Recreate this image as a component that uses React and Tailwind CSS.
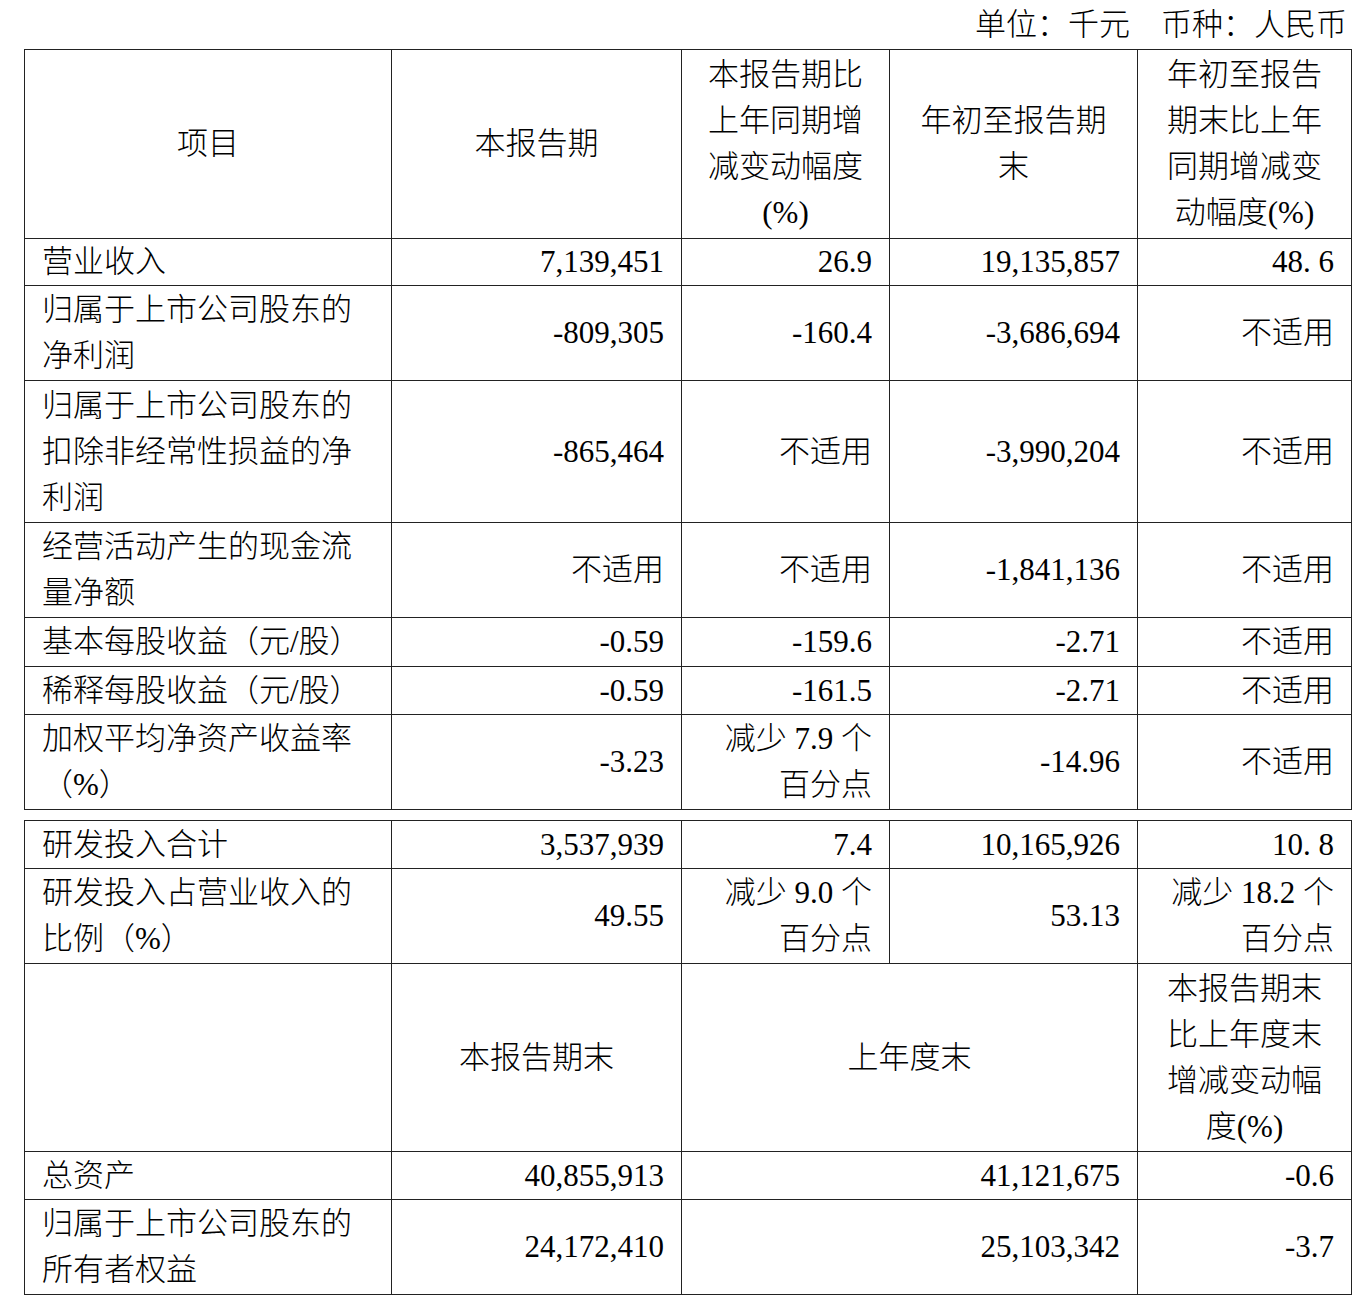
const FONT = "font-['Liberation_Serif','Noto_Sans_CJK_SC',serif]";

const cell = "border border-[#222] px-[17px] py-0 align-middle leading-[46px] font-light";
const label = `${cell} text-left`;
const num = `${cell} text-right`;
const head = `${cell} text-center`;

const mainRows = [
  { h: "h-[47px]", label: ["营业收入"], vals: ["7,139,451", "26.9", "19,135,857", "48. 6"] },
  { h: "h-[95px]", label: ["归属于上市公司股东的", "净利润"], vals: ["-809,305", "-160.4", "-3,686,694", "不适用"] },
  { h: "h-[142px]", label: ["归属于上市公司股东的", "扣除非经常性损益的净", "利润"], vals: ["-865,464", "不适用", "-3,990,204", "不适用"] },
  { h: "h-[95px]", label: ["经营活动产生的现金流", "量净额"], vals: ["不适用", "不适用", "-1,841,136", "不适用"] },
  { h: "h-[49px]", label: ["基本每股收益（元/股）"], vals: ["-0.59", "-159.6", "-2.71", "不适用"] },
  { h: "h-[48px]", label: ["稀释每股收益（元/股）"], vals: ["-0.59", "-161.5", "-2.71", "不适用"] },
  { h: "h-[95px]", label: ["加权平均净资产收益率", "（%）"], vals: ["-3.23", ["减少 7.9 个", "百分点"], "-14.96", "不适用"] },
];

function Lines({ items }) {
  const list = Array.isArray(items) ? items : [items];
  return list.map((t, i) => (
    <span key={i} className="block whitespace-nowrap">
      {t}
    </span>
  ));
}

function Cols() {
  return (
    <colgroup>
      <col className="w-[367px]" />
      <col className="w-[290px]" />
      <col className="w-[208px]" />
      <col className="w-[248px]" />
      <col className="w-[214px]" />
    </colgroup>
  );
}

export default function App() {
  return (
    <div className={`min-h-[1302px] w-[1361px] bg-white pl-[24px] pr-[10px] text-[31px] font-light text-black ${FONT}`}>
      <div className="flex h-[49px] items-center justify-end pr-[4px] leading-none">
        单位：千元　币种：人民币
      </div>

      <table className="w-[1327px] table-fixed border-collapse">
        <Cols />
        <thead>
          <tr className="h-[189px]">
            <th className={head}>项目</th>
            <th className={head}>本报告期</th>
            <th className={head}>
              <Lines items={["本报告期比", "上年同期增", "减变动幅度", "(%)"]} />
            </th>
            <th className={head}>
              <Lines items={["年初至报告期", "末"]} />
            </th>
            <th className={head}>
              <Lines items={["年初至报告", "期末比上年", "同期增减变", "动幅度(%)"]} />
            </th>
          </tr>
        </thead>
        <tbody>
          {mainRows.map((row) => (
            <tr key={row.label.join("")} className={row.h}>
              <td className={label}>
                <Lines items={row.label} />
              </td>
              {row.vals.map((v, i) => (
                <td key={i} className={num}>
                  <Lines items={v} />
                </td>
              ))}
            </tr>
          ))}
        </tbody>
      </table>

      <table className="mt-[10px] w-[1327px] table-fixed border-collapse">
        <Cols />
        <tbody>
          <tr className="h-[48px]">
            <td className={label}>研发投入合计</td>
            <td className={num}>3,537,939</td>
            <td className={num}>7.4</td>
            <td className={num}>10,165,926</td>
            <td className={num}>10. 8</td>
          </tr>
          <tr className="h-[95px]">
            <td className={label}>
              <Lines items={["研发投入占营业收入的", "比例（%）"]} />
            </td>
            <td className={num}>49.55</td>
            <td className={num}>
              <Lines items={["减少 9.0 个", "百分点"]} />
            </td>
            <td className={num}>53.13</td>
            <td className={num}>
              <Lines items={["减少 18.2 个", "百分点"]} />
            </td>
          </tr>
          <tr className="h-[188px]">
            <td className={head}></td>
            <td className={head}>本报告期末</td>
            <td className={head} colSpan={2}>
              上年度末
            </td>
            <td className={head}>
              <Lines items={["本报告期末", "比上年度末", "增减变动幅", "度(%)"]} />
            </td>
          </tr>
          <tr className="h-[48px]">
            <td className={label}>总资产</td>
            <td className={num}>40,855,913</td>
            <td className={num} colSpan={2}>
              41,121,675
            </td>
            <td className={num}>-0.6</td>
          </tr>
          <tr className="h-[95px]">
            <td className={label}>
              <Lines items={["归属于上市公司股东的", "所有者权益"]} />
            </td>
            <td className={num}>24,172,410</td>
            <td className={num} colSpan={2}>
              25,103,342
            </td>
            <td className={num}>-3.7</td>
          </tr>
        </tbody>
      </table>
    </div>
  );
}
